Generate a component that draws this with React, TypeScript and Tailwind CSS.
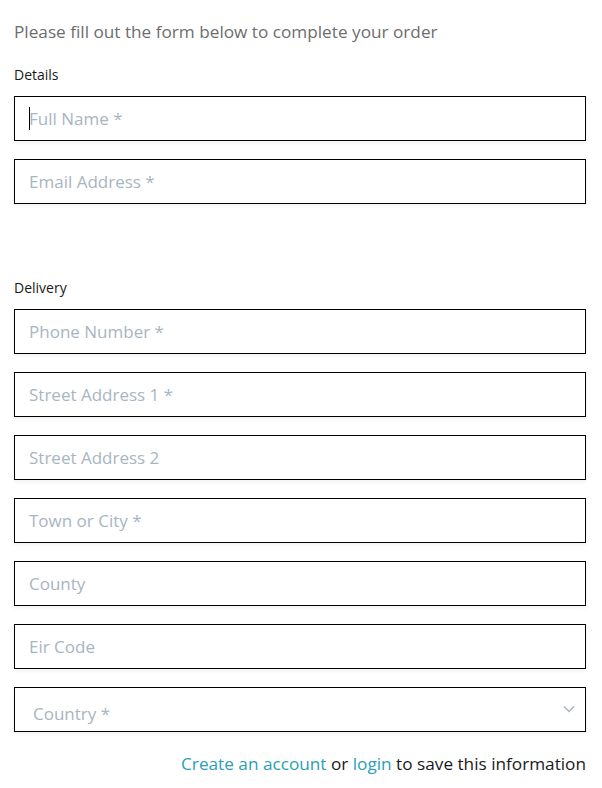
import React from "react";

const font = { fontFamily: '"Open Sans", "Noto Sans", sans-serif' };

function Field({ placeholder, focused }: { placeholder: string; focused?: boolean }) {
  return (
    <div className="h-[45px] border border-black bg-white shadow-[0_2px_4px_rgba(0,0,0,0.06)] flex items-center pl-[14px] relative">
      {focused && <span className="absolute left-[14px] top-[10px] w-px h-[23px] bg-black" />}
      <span className="text-[17px] text-[#a8b5c2] leading-none">{placeholder}</span>
    </div>
  );
}

export default function App() {
  return (
    <div className="w-[602px] h-[788px] bg-white pl-[14px] pr-[16px] pt-[20px]" style={font}>
      <p className="text-[17.2px] text-[#6d6d6d] leading-[24px]">Please fill out the form below to complete your order</p>
      <p className="mt-[21px] text-[14px] text-[#1a1a1a] leading-[20px]">Details</p>
      <div className="mt-[11px] flex flex-col gap-[18px]">
        <Field placeholder="Full Name *" focused />
        <Field placeholder="Email Address *" />
      </div>
      <p className="mt-[74px] text-[14px] text-[#1a1a1a] leading-[20px]">Delivery</p>
      <div className="mt-[11px] flex flex-col gap-[18px]">
        <Field placeholder="Phone Number *" />
        <Field placeholder="Street Address 1 *" />
        <Field placeholder="Street Address 2" />
        <Field placeholder="Town or City *" />
        <Field placeholder="County" />
        <Field placeholder="Eir Code" />
        <div className="h-[45px] border border-black bg-white shadow-[0_2px_4px_rgba(0,0,0,0.06)] relative overflow-hidden">
          <span className="absolute left-[18px] top-[14px] text-[17px] text-[#a8b5c2] leading-[24px] h-[29px] overflow-hidden block">Country *</span>
          <svg className="absolute right-[10px] top-[17px]" width="12" height="8" viewBox="0 0 12 8" fill="none">
            <path d="M1 1.5L6 6.5L11 1.5" stroke="#a8b5c2" strokeWidth="1.5" />
          </svg>
        </div>
      </div>
      <p className="mt-[20px] text-right text-[17.2px] text-[#1a1a1a] leading-[24px]">
        <span className="text-[#2a9fb3]">Create an account</span> or{" "}
        <span className="text-[#2a9fb3]">login</span> to save this information
      </p>
    </div>
  );
}
